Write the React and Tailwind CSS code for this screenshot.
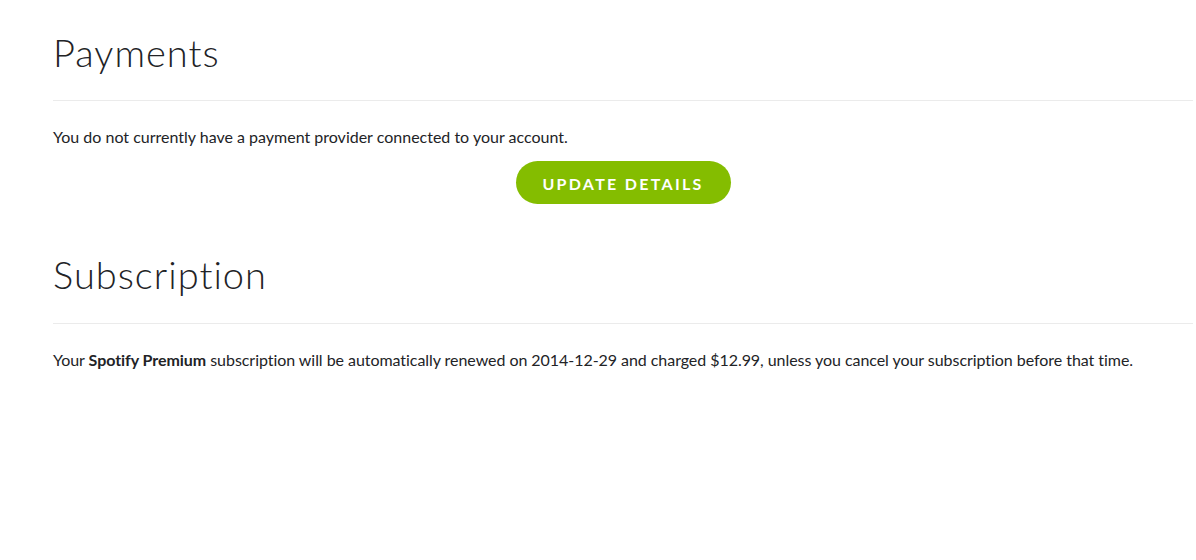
export default function App() {
  return (
    <div className="w-[1196px] h-[560px] bg-white text-[#222326]" style={{ fontFamily: 'Lato, "Open Sans", sans-serif' }}>
      <div className="pl-[53px] pr-[3px] pt-[30px]">
        <h1 className="text-[38px] leading-[44px] font-light tracking-[1px]">Payments</h1>
        <div className="mt-[26px] h-px bg-[#ebebeb]" />
        <p className="mt-[26px] text-[16px] leading-[20px]">You do not currently have a payment provider connected to your account.</p>
        <div className="mt-[14px] flex justify-center">
          <button className="h-[43px] w-[215px] pt-[3px] rounded-full bg-[#84bd00] text-white text-[16px] font-bold tracking-[2.3px]">UPDATE DETAILS</button>
        </div>
        <h1 className="mt-[48px] text-[38px] leading-[44px] font-light tracking-[1px]">Subscription</h1>
        <div className="mt-[27px] h-px bg-[#ebebeb]" />
        <p className="mt-[26px] text-[16px] leading-[20px] tracking-[-0.05px]">
          Your <span className="font-bold">Spotify Premium</span> subscription will be automatically renewed on 2014-12-29 and charged $12.99, unless you cancel your subscription before that time.
        </p>
      </div>
    </div>
  );
}
